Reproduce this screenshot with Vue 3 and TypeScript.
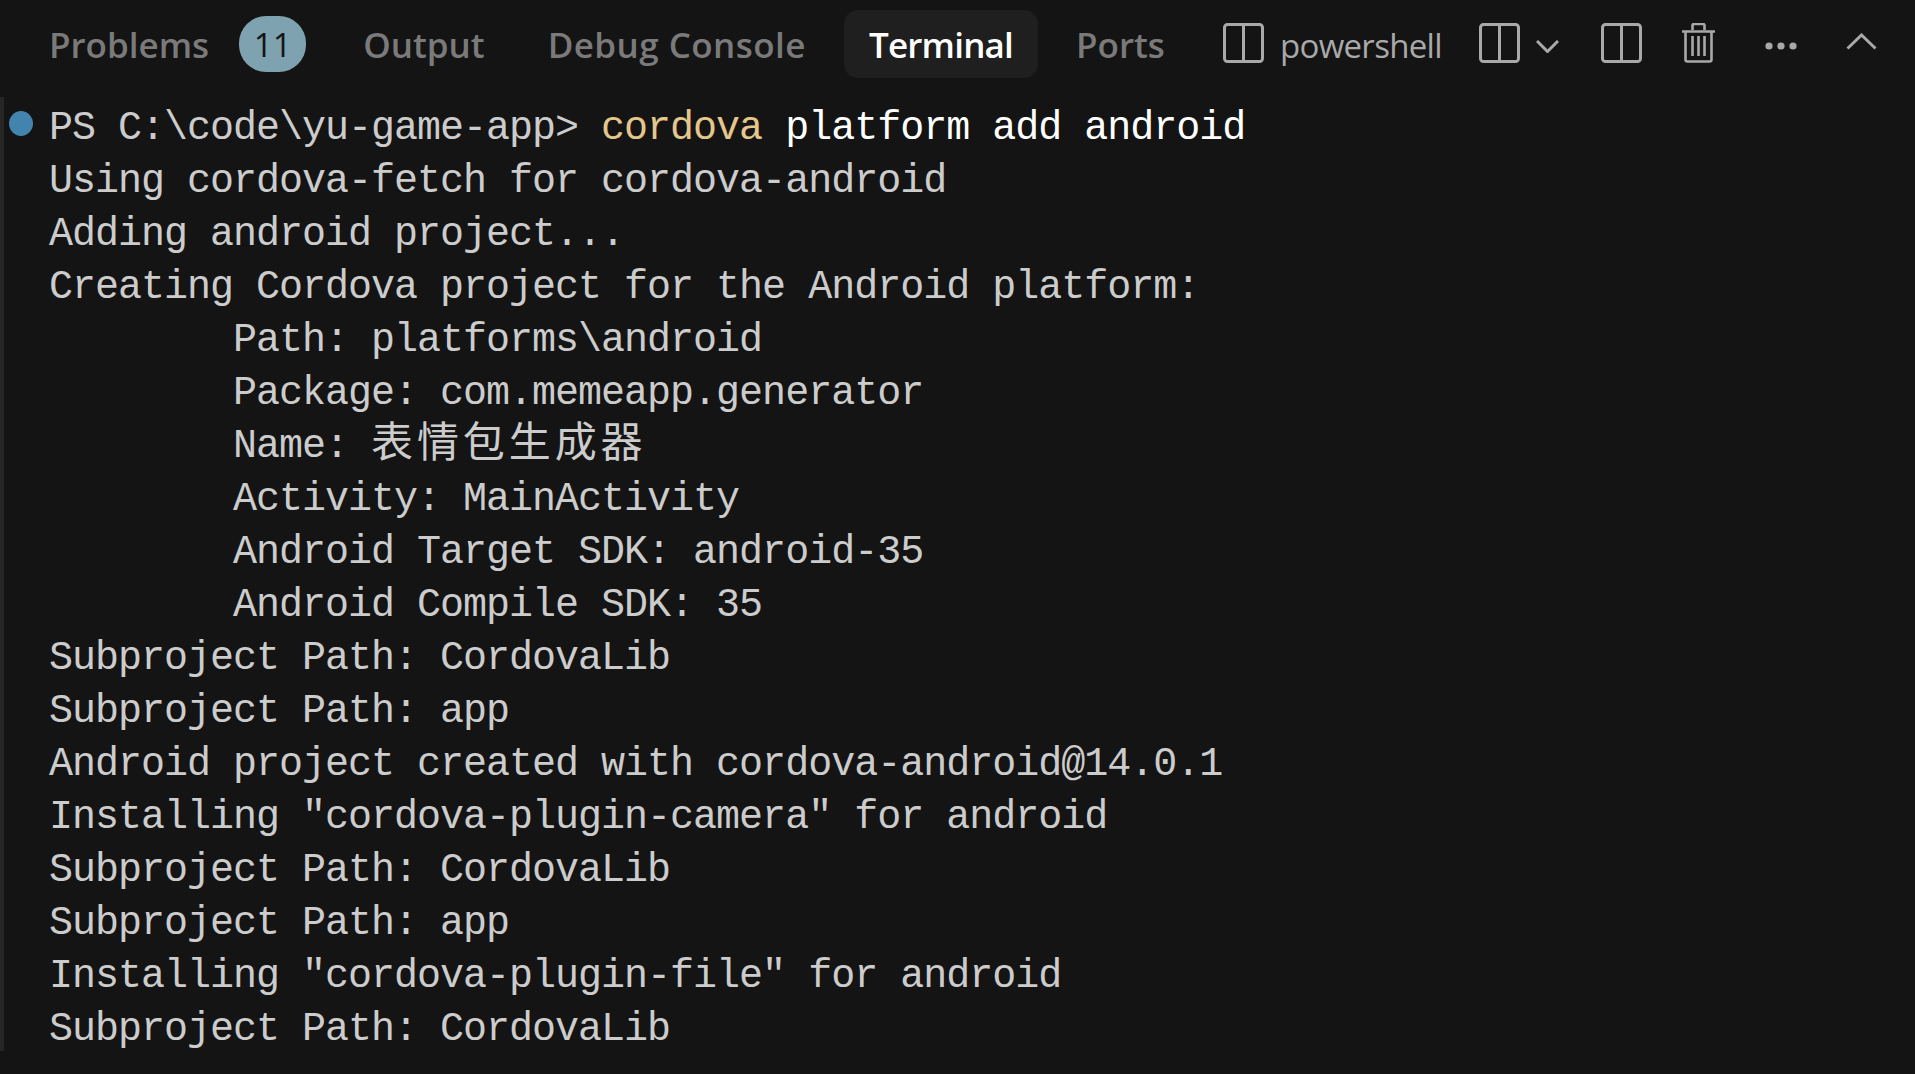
<script setup lang="ts">
const tabs = [
  { label: 'Problems', badge: '11' },
  { label: 'Output' },
  { label: 'Debug Console' },
  { label: 'Terminal', active: true },
  { label: 'Ports' },
]
const lines: string[] = [
  'Using cordova-fetch for cordova-android',
  'Adding android project...',
  'Creating Cordova project for the Android platform:',
  '        Path: platforms\\android',
  '        Package: com.memeapp.generator',
]
const rest: string[] = [
  '        Activity: MainActivity',
  '        Android Target SDK: android-35',
  '        Android Compile SDK: 35',
  'Subproject Path: CordovaLib',
  'Subproject Path: app',
  'Android project created with cordova-android@14.0.1',
  'Installing "cordova-plugin-camera" for android',
  'Subproject Path: CordovaLib',
  'Subproject Path: app',
  'Installing "cordova-plugin-file" for android',
  'Subproject Path: CordovaLib',
]
const namePrefix = '        Name: '
const promptText = 'PS C:\\code\\yu-game-app> '
const sp = ' '
</script>

<template>
  <div class="panel">
    <header class="bar">
      <nav class="tabs">
        <div v-for="t in tabs" :key="t.label" class="tab" :class="{ active: t.active }">
          <span>{{ t.label }}</span>
          <span v-if="t.badge" class="badge">{{ t.badge }}</span>
        </div>
      </nav>
      <div class="actions">
        <svg class="ico split" viewBox="0 0 41 40"><rect x="1.5" y="1.5" width="38" height="37" rx="3" /><path d="M20.5 1.5v37" /></svg>
        <span class="shell">powershell</span>
        <svg class="ico split" viewBox="0 0 41 40"><rect x="1.5" y="1.5" width="38" height="37" rx="3" /><path d="M20.5 1.5v37" /></svg>
        <svg class="ico chev" viewBox="0 0 23 13"><path d="M1 1l10.5 10.5L22 1" /></svg>
        <svg class="ico split third" viewBox="0 0 41 40"><rect x="1.5" y="1.5" width="38" height="37" rx="3" /><path d="M20.5 1.5v37" /></svg>
        <svg class="ico trash" viewBox="0 0 35 40"><path d="M1 8.5h33" /><path d="M11.5 7V2.5a1.5 1.5 0 0 1 1.5-1.5h9a1.5 1.5 0 0 1 1.5 1.5V7" /><path d="M4.5 9v27.5a2 2 0 0 0 2 2h22a2 2 0 0 0 2-2V9" /><path d="M11.5 13v20M17.5 13v20M23.5 13v20" /></svg>
        <svg class="dots" viewBox="0 0 32 8"><circle cx="4" cy="4" r="3.6" /><circle cx="16" cy="4" r="3.6" /><circle cx="28" cy="4" r="3.6" /></svg>
        <svg class="ico caret" viewBox="0 0 31 17"><path d="M1.5 15.5L15.5 2l14 13.5" /></svg>
      </div>
    </header>
    <main class="term">
      <span class="dot"></span>
      <div class="line">{{ promptText }}<span class="cmd">cordova</span>{{ sp }}<span class="arg">platform add android</span></div>
      <div v-for="(l, i) in lines" :key="i" class="line">{{ l }}</div>
      <div class="line">{{ namePrefix }}<span class="cjk">表情包生成器</span></div>
      <div v-for="(l, i) in rest" :key="'r' + i" class="line">{{ l }}</div>
    </main>
  </div>
</template>

<style>
html, body { margin: 0; background: #141414; }
</style>

<style scoped>
.panel {
  width: 1915px;
  height: 1074px;
  background: #141414;
  overflow: hidden;
  display: flex;
  flex-direction: column;
}
.bar {
  height: 97px;
  display: flex;
  align-items: flex-start;
  flex: none;
  font-family: "Open Sans", "Noto Sans", sans-serif;
}
.tabs {
  display: flex;
  align-items: center;
  box-sizing: border-box;
  width: 1223px;
  flex: none;
  height: 68px;
  margin-top: 10px;
  padding-left: 24px;
}
.tab {
  display: flex;
  align-items: center;
  height: 68px;
  padding: 0 25px;
  margin-right: 13px;
  font-size: 35px;
  font-weight: 600;
  color: #7a7a7a;
  border-radius: 14px;
}
.tab:nth-child(3) { letter-spacing: 0.45px; }
.tab.active {
  background: #1f1f1f;
  color: #ffffff;
  font-weight: 600;
  letter-spacing: -0.8px;
}
.badge {
  width: 67px;
  height: 56px;
  margin-left: 30px;
  margin-right: -6px;
  border-radius: 27px;
  background: #7fa2b1;
  color: #141414;
  font-size: 33px;
  font-weight: 400;
  display: flex;
  align-items: center;
  justify-content: center;
}
.actions {
  display: flex;
  align-items: flex-start;
  height: 68px;
  margin-top: 10px;
  color: #a9a9a9;
}
.ico { fill: none; stroke: #a9a9a9; stroke-width: 3; flex: none; }
.split { width: 41px; height: 40px; margin-top: 13px; }
.shell {
  margin-left: 16px;
  font-size: 33px;
  line-height: 72px;
  letter-spacing: -0.7px;
  width: 199px;
  flex: none;
}
.chev { width: 23px; height: 13px; margin: 30px 0 0 16px; }
.third { margin-left: 42px; }
.trash { width: 35px; height: 40px; margin: 13px 0 0 39px; stroke-width: 2.6; }
.dots { width: 32px; height: 8px; margin: 32px 0 0 49px; fill: #a9a9a9; }
.caret { width: 31px; height: 17px; margin: 23px 0 0 49px; }
.term {
  position: relative;
  flex: none;
  box-sizing: border-box;
  height: 954px;
  padding: 5px 0 0 49px;
  font-family: "Liberation Mono", "Noto Sans CJK SC", monospace;
  font-size: 40px;
  letter-spacing: -1px;
  color: #cccccc;
  background: linear-gradient(to right, #262626 4px, transparent 4px);
}
.line {
  height: 53px;
  line-height: 53px;
  white-space: pre;
}
.cmd { color: #e5c78b; }
.arg { color: #ffffff; }
.cjk {
  font-family: "Noto Sans CJK SC", sans-serif;
  font-size: 42px;
  letter-spacing: 3.9px;
  line-height: 0;
}
.dot {
  position: absolute;
  left: 9px;
  top: 14px;
  width: 24px;
  height: 25px;
  border-radius: 50%;
  background: #4284ae;
}
</style>
